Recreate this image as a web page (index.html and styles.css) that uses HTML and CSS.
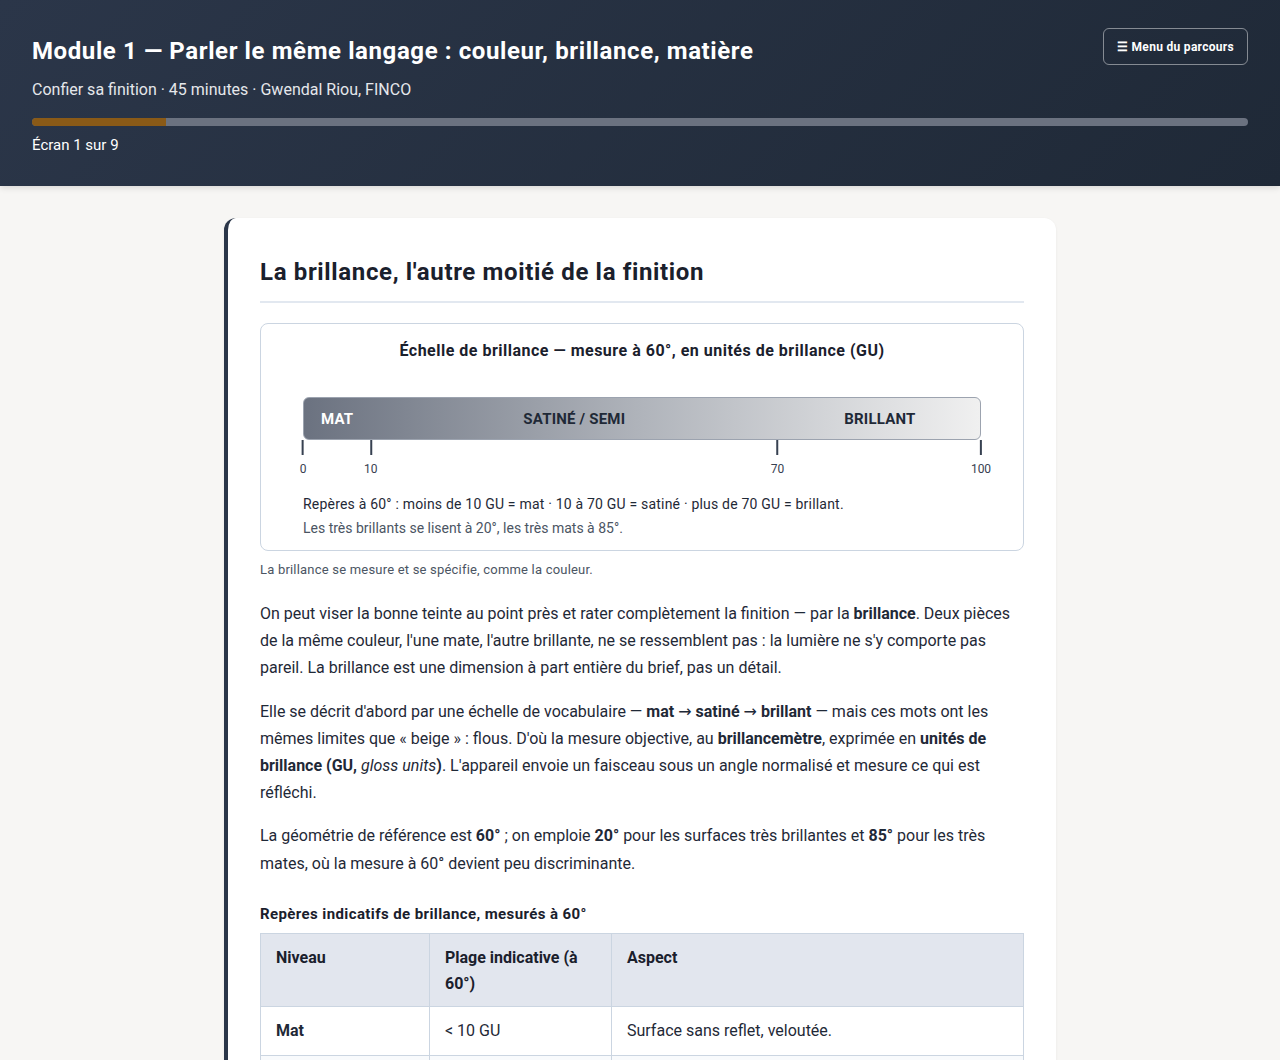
FILE: index.html
```html
<!DOCTYPE html>
<html lang="fr">
<head>
<meta charset="utf-8">
<title>Module 1</title>
<link rel="stylesheet" href="styles.css">
</head>
<body>
<header class="top">
  <div class="top-row">
    <div class="top-text">
      <h1 class="title">Module 1 — Parler le même langage : couleur, brillance, matière</h1>
      <p class="meta">Confier sa finition · 45 minutes · Gwendal Riou, FINCO</p>
    </div>
    <button class="menu-btn"><span class="burger">☰</span> Menu du parcours</button>
  </div>
  <div class="progress"><div class="progress-fill"></div></div>
  <p class="step">Écran 1 sur 9</p>
</header>
<main class="main">
  <article class="card">
    <h2 class="card-title">La brillance, l'autre moitié de la finition</h2>
    <figure class="scale-fig">
      <div class="scale-box">
        <div class="scale-title">Échelle de brillance — mesure à 60°, en unités de brillance (GU)</div>
        <div class="bar">
          <span class="lab lab-mat">MAT</span>
          <span class="lab lab-sat">SATINÉ / SEMI</span>
          <span class="lab lab-bri">BRILLANT</span>
        </div>
        <div class="ticks">
          <span class="tick" style="left:0%"><i></i><b>0</b></span>
          <span class="tick" style="left:10%"><i></i><b>10</b></span>
          <span class="tick" style="left:70%"><i></i><b>70</b></span>
          <span class="tick" style="left:100%"><i></i><b>100</b></span>
        </div>
        <div class="scale-note">Repères à 60° : moins de 10 GU = mat · 10 à 70 GU = satiné · plus de 70 GU = brillant.</div>
        <div class="scale-sub">Les très brillants se lisent à 20°, les très mats à 85°.</div>
      </div>
      <figcaption class="caption">La brillance se mesure et se spécifie, comme la couleur.</figcaption>
    </figure>
    <p class="txt">On peut viser la bonne teinte au point près et rater complètement la finition — par la <strong>brillance</strong>. Deux pièces de la même couleur, l'une mate, l'autre brillante, ne se ressemblent pas : la lumière ne s'y comporte pas pareil. La brillance est une dimension à part entière du brief, pas un détail.</p>
    <p class="txt">Elle se décrit d'abord par une échelle de vocabulaire — <strong>mat <span class="arr">→</span> satiné <span class="arr">→</span> brillant</strong> — mais ces mots ont les mêmes limites que « beige » : flous. D'où la mesure objective, au <strong>brillancemètre</strong>, exprimée en <strong>unités de brillance (GU, <em class="gu">gloss units</em>)</strong>. L'appareil envoie un faisceau sous un angle normalisé et mesure ce qui est réfléchi.</p>
    <p class="txt">La géométrie de référence est <strong>60°</strong> ; on emploie <strong>20°</strong> pour les surfaces très brillantes et <strong>85°</strong> pour les très mates, où la mesure à 60° devient peu discriminante.</p>
    <h3 class="table-title">Repères indicatifs de brillance, mesurés à 60°</h3>
    <table class="gtable">
      <thead>
        <tr><th class="c1">Niveau</th><th class="c2">Plage indicative (à 60°)</th><th class="c3">Aspect</th></tr>
      </thead>
      <tbody>
        <tr><td><strong>Mat</strong></td><td>&lt; 10 GU</td><td>Surface sans reflet, veloutée.</td></tr>
        <tr><td><strong>Satiné</strong></td><td>10 à 70 GU</td><td>Reflet doux, diffus.</td></tr>
        <tr><td><strong>Brillant</strong></td><td>&gt; 70 GU</td><td>Reflet net, effet miroir.</td></tr>
      </tbody>
    </table>
  </article>
</main>
</body>
</html>
```
FILE: styles.css
```css
* { box-sizing: border-box; }
html, body { margin: 0; padding: 0; }
body {
  font-family: "Segoe UI", Roboto, "Noto Sans", "Liberation Sans", sans-serif;
  background: #f7f6f4;
  color: #1f2937;
}
.top {
  background: linear-gradient(135deg, #2b3649 0%, #1f2937 100%);
  color: #fff;
  padding: 28px 32px 30px;
  box-shadow: 0 2px 6px rgba(0,0,0,0.12);
}
.top-row {
  display: flex;
  justify-content: space-between;
  align-items: flex-start;
}
.title {
  margin: 7px 0 0;
  font-size: 24px;
  font-weight: 700;
  line-height: 32px;
  letter-spacing: 0.6px;
}
.meta {
  margin: 12px 0 0;
  font-size: 16px;
  color: #e5e7eb;
  line-height: 22px;
}
.menu-btn {
  font-family: inherit;
  background: transparent;
  color: #fff;
  border: 1px solid rgba(255,255,255,0.45);
  border-radius: 6px;
  padding: 11px 13px 10px;
  font-size: 12px;
  font-weight: 700;
  line-height: 14px;
  letter-spacing: 0.3px;
}
.progress {
  margin-top: 17px;
  height: 8px;
  background: #6b7280;
  border-radius: 4px;
  overflow: hidden;
}
.progress-fill {
  width: 11%;
  height: 100%;
  background: #8a5a17;
}
.step {
  margin: 8px 0 0;
  font-size: 15px;
  line-height: 22px;
}
.main {
  padding: 32px 0 40px;
  display: flex;
  justify-content: center;
}
.card {
  width: 832px;
  background: #fff;
  border-radius: 12px;
  border-left: 4px solid #2b3649;
  padding: 32px;
  box-shadow: 0 1px 3px rgba(0,0,0,0.06);
}
.card-title {
  margin: 6px 0 20px;
  padding-bottom: 13px;
  border-bottom: 2px solid #e2e8f0;
  font-size: 24px;
  line-height: 32px;
  letter-spacing: 0.65px;
  color: #1a202c;
}
.scale-fig { margin: 0 0 21px; }
.scale-box {
  border: 1px solid #cbd5e1;
  border-radius: 8px;
  padding: 16px 42px 12px;
}
.scale-title {
  margin: 0 0 35px;
  text-align: center;
  font-weight: 700;
  font-size: 16px;
  line-height: 22px;
  letter-spacing: 0.5px;
  color: #1a202c;
}
.bar {
  height: 43px;
  border: 1px solid #9ca3af;
  border-radius: 6px;
  background: linear-gradient(90deg, #6b7280 0%, #b0b4bb 50%, #f0f0f0 100%);
  display: flex;
  align-items: center;
  padding: 0 0 0 17px;
  font-weight: 700;
  font-size: 15px;
  letter-spacing: 0.2px;
}
.lab-mat { color: #fff; }
.lab-sat { color: #1f2937; margin-left: 170px; }
.lab-bri { color: #1f2937; margin-left: 219px; }
.ticks {
  position: relative;
  height: 52px;
}
.tick {
  position: absolute;
  top: 0;
  transform: translateX(-50%);
  display: flex;
  flex-direction: column;
  align-items: center;
}
.tick i {
  display: block;
  width: 2px;
  height: 15px;
  background: #374151;
}
.tick b {
  font-weight: 400;
  font-size: 12px;
  color: #374151;
  margin-top: 6px;
  line-height: 16px;
}
.scale-note {
  font-size: 14px;
  line-height: 24px;
  color: #1f2937;
  letter-spacing: 0.2px;
}
.scale-sub {
  margin-top: 2px;
  font-size: 14px;
  line-height: 20px;
  color: #4b5563;
}
.caption {
  margin: 10px 0 0;
  font-size: 13px;
  line-height: 18px;
  color: #4b5563;
  letter-spacing: 0.2px;
}
.txt {
  font-size: 16px;
  line-height: 1.7;
  margin: 0 0 16px;
}
.arr { font-family: "DejaVu Sans", sans-serif; font-weight: 400; font-size: 16px; }
.gu { font-weight: 400; }
.table-title {
  margin: 27px 0 9px;
  font-size: 15px;
  line-height: 20px;
  letter-spacing: 0.4px;
  color: #1a202c;
}
.gtable {
  width: 100%;
  border-collapse: collapse;
  font-size: 16px;
  line-height: 26px;
}
.gtable th, .gtable td {
  border: 1px solid #cbd5e1;
  padding: 11px 15px;
  text-align: left;
  vertical-align: top;
}
.gtable th { background: #e2e6ee; font-weight: 700; color: #1a202c; padding: 11px 15px 9px; }
.gtable tbody tr:nth-child(even) td { background: #f8fafc; }
.c1 { width: 169px; }
.c2 { width: 182px; }
```
